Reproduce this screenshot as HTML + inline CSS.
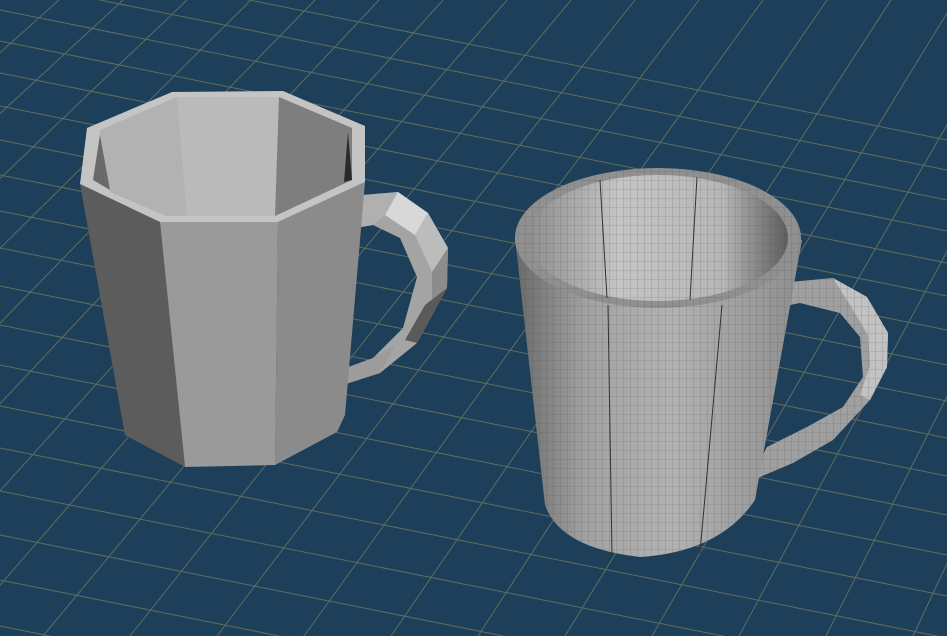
<!DOCTYPE html>
<html><head><meta charset="utf-8"><style>
html,body{margin:0;padding:0;background:#1d3f59;overflow:hidden;width:947px;height:636px}
svg{display:block;position:absolute;left:0;top:0}
</style></head><body>
<svg width="947" height="636" viewBox="0 0 947 636" xmlns="http://www.w3.org/2000/svg">
<defs>
<pattern id="mesh" width="7" height="9" patternUnits="userSpaceOnUse">
<path d="M0 0H7M0 0V9" stroke="#444" stroke-width="0.6" opacity="0.5" fill="none"/>
</pattern>
<linearGradient id="body" x1="0" x2="1">
<stop offset="0" stop-color="#6a6a6a"/><stop offset="0.25" stop-color="#a2a2a2"/>
<stop offset="0.55" stop-color="#b2b2b2"/><stop offset="1" stop-color="#8e8e8e"/>
</linearGradient>
<linearGradient id="inner" x1="0" x2="1">
<stop offset="0" stop-color="#8e8e8e"/><stop offset="0.35" stop-color="#c4c4c4"/>
<stop offset="0.75" stop-color="#b6b6b6"/><stop offset="1" stop-color="#5e5e5e"/>
</linearGradient>
</defs>
<rect width="947" height="636" fill="#1d3f59"/>
<g stroke="#8e8c62" stroke-width="1" opacity="0.6" fill="none">
<path d="M0 -50L947 140M0 -20L947 170M0 10L947 200M0 41L947 231M0 73L947 263M0 106L947 296M0 140L947 330M0 175L947 365M0 211L947 401M0 248L947 438M0 286L947 476M0 325L947 515M0 365L947 555M0 406L947 596M0 448L947 638M0 491L947 681M0 535L947 725M0 580L947 770M0 626L947 816"/>
<path d="M-5 0L-740 636M59 0L-653 636M123 0L-566 636M187 0L-479 636M251 0L-392 636M315 0L-305 636M379 0L-218 636M443 0L-131 636M507 0L-44 636M571 0L43 636M635 0L130 636M699 0L217 636M763 0L304 636M827 0L391 636M891 0L478 636M955 0L565 636M1019 0L652 636M1083 0L739 636M1147 0L826 636M1211 0L913 636M1275 0L1000 636"/>
</g>

<!-- LEFT MUG -->
<polygon points="343,213 363,195 398,192 428,213 448,248 447,288 417,343 380,373 327,390 327,375 373,358 403,328 417,277 400,238 373,225 343,230" fill="#a4a4a4"/>
<polygon points="363,195 398,192 385,215 373,225 343,230 343,213" fill="#b0b0b0"/>
<polygon points="398,192 428,213 415,235 385,215" fill="#d8d8d8"/>
<polygon points="428,213 448,248 432,272 415,235" fill="#bcbcbc"/>
<polygon points="448,248 447,288 432,300 432,272" fill="#8c8c8c"/>
<polygon points="447,288 417,343 405,340 425,305" fill="#5a5a5a"/>
<polygon points="327,375 373,358 395,345 380,373 327,390" fill="#9c9c9c"/>

<polygon points="80,184 160,222 185,467 125,435" fill="#5c5c5c"/>
<polygon points="160,222 278,222 275,465 185,467" fill="#9a9a9a"/>
<polygon points="278,222 365,182 345,415 337,432 275,465" fill="#8b8b8b"/>

<polygon points="80,184 87,128 172,92 283,91 365,126 365,182 278,222 160,222" fill="#c4c4c4"/>
<polygon points="93,180 100,130 177,97 279,97 352,128 352,180 275,216 166,216" fill="#b8b8b8"/>
<polygon points="100,130 177,97 187,216 166,216 110,192" fill="#b2b2b2"/>
<polygon points="100,135 110,190 93,180" fill="#6a6a6a"/>
<polygon points="177,97 279,97 275,216 187,216" fill="#bababa"/>
<polygon points="279,97 352,128 352,180 275,216" fill="#7e7e7e"/>
<polygon points="348,132 352,180 344,182" fill="#2a2a2a"/>

<!-- RIGHT MUG -->
<path d="M790,282 L833,278 L867,297 L888,333 L887,367 L870,400 L833,440 L793,463 L753,480 L753,473 L767,447 L807,427 L843,407 L863,377 L860,337 L840,313 L800,303 L780,307 Z" fill="#a0a0a0"/>
<path d="M833,278 L867,297 L888,333 L887,367 L870,400 L860,395 L870,365 L868,335 L850,305 Z" fill="#c2c2c2"/>
<path d="M790,282 L833,278 L867,297 L888,333 L887,367 L870,400 L833,440 L793,463 L753,480 L753,473 L767,447 L807,427 L843,407 L863,377 L860,337 L840,313 L800,303 L780,307 Z" fill="url(#mesh)"/>
<path d="M515,238 L545,505 Q560,548 640,557 Q720,552 755,500 L802,240 Z" fill="url(#body)"/>
<path d="M515,238 L545,505 Q560,548 640,557 Q720,552 755,500 L802,240 Z" fill="url(#mesh)"/>
<line x1="608" y1="305" x2="612" y2="556" stroke="#333" stroke-width="1"/>
<line x1="722" y1="305" x2="700" y2="553" stroke="#333" stroke-width="1"/>
<ellipse cx="658" cy="238" rx="143" ry="70" fill="#909090"/>
<ellipse cx="658" cy="238" rx="143" ry="70" fill="url(#mesh)"/>
<ellipse cx="658" cy="238" rx="130" ry="63" fill="url(#inner)"/>
<ellipse cx="658" cy="238" rx="130" ry="63" fill="url(#mesh)"/>
<line x1="600" y1="180" x2="607" y2="298" stroke="#333" stroke-width="1"/>
<line x1="697" y1="177" x2="690" y2="300" stroke="#333" stroke-width="1"/>
</svg>
</body></html>
